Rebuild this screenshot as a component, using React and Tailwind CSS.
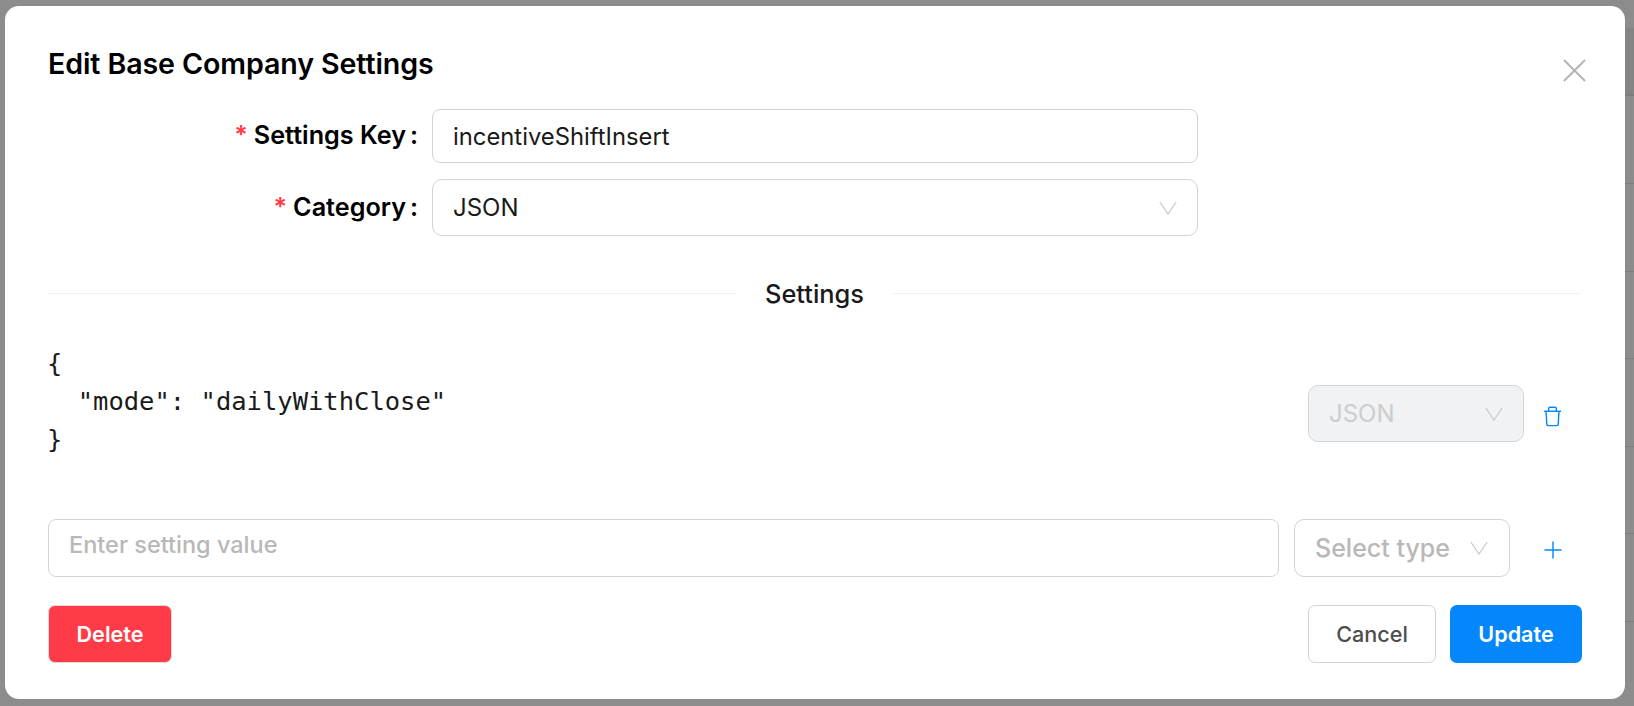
import React from "react";

const Chevron = ({ className }) => (
  <svg viewBox="0 0 18 18" className={className} fill="none" stroke="currentColor" strokeWidth="1.2">
    <path d="M0.8 3 L9 15 L17.2 3" />
  </svg>
);

const Trash = () => (
  <svg viewBox="0 0 20 22" className="w-[19px] h-[21px] text-[#0587fb]" fill="none" stroke="currentColor" strokeWidth="1.5">
    <path d="M1 5.5 H19" />
    <path d="M6 5.5 V2.5 Q6 1.2 7.3 1.2 H12.7 Q14 1.2 14 2.5 V5.5" />
    <path d="M3.2 5.5 L4 19 Q4.1 20.6 5.7 20.6 H14.3 Q15.9 20.6 16 19 L16.8 5.5" />
  </svg>
);

const Plus = () => (
  <svg viewBox="0 0 20 20" className="w-[20px] h-[20px] text-[#0587fb]" fill="none" stroke="currentColor" strokeWidth="1.4">
    <path d="M1.5 10 H18.5 M10 1.5 V18.5" />
  </svg>
);

export default function App() {
  return (
    <div className="h-[706px] w-[1634px] overflow-hidden bg-[#8c8c8c] flex pl-[5px] font-['Inter','Liberation_Sans',sans-serif]">
      <div className="mt-[6px] shrink-0 w-[1620px] h-[693px] bg-white rounded-[14px] pt-[43px] pl-[43px] pr-[42px]">
        <div className="flex justify-between h-[29px]">
          <h1 className="text-[28.6px] leading-[29px] font-semibold text-black tracking-[-0.1px]">Edit Base Company Settings</h1>
          <svg viewBox="0 0 24 24" className="w-[23px] h-[23px] mt-[10px] mr-[-3px] text-[#b3b3b3]" fill="none" stroke="currentColor" strokeWidth="2">
            <path d="M1 1 L23 23 M23 1 L1 23" />
          </svg>
        </div>

        <div className="mt-[31px] flex items-center h-[54px]">
          <label className="w-[384px] pr-[14px] text-right text-[25.2px] font-semibold text-black leading-none">
            <span className="text-[#ff3b47] mr-[6px]">*</span>Settings Key<span className="ml-[4px]">:</span>
          </label>
          <div className="w-[766px] h-[54px] flex items-center pt-[2px] border border-[#d4d4d4] rounded-[8px] px-[20px] text-[23.8px] text-[#1a1a1a]">
            incentiveShiftInsert
          </div>
        </div>

        <div className="mt-[16px] flex items-center h-[57px]">
          <label className="w-[384px] pr-[14px] text-right text-[25.2px] font-semibold text-black leading-none pt-[1px]">
            <span className="text-[#ff3b47] mr-[6px]">*</span>Category<span className="ml-[4px]">:</span>
          </label>
          <div className="w-[766px] h-[57px] flex items-center justify-between border border-[#d4d4d4] rounded-[10px] pl-[20px] pr-[20px] text-[24px] text-[#1a1a1a]">
            JSON
            <Chevron className="w-[18px] h-[18px] text-[#c8c8c8]" />
          </div>
        </div>

        <div className="mt-[38px] mr-[2px] flex items-center h-[38px]">
          <div className="w-[689px] h-[1px] bg-[#f0f0f0]" />
          <span className="flex-1 text-center pt-[3px] text-[25.4px] font-medium text-[#1a1a1a]">Settings</span>
          <div className="w-[689px] h-[1px] bg-[#f0f0f0]" />
        </div>

        <div className="mt-[32px] flex items-start">
          <pre className="flex-1 ml-[-1px] font-['DejaVu_Sans_Mono',monospace] text-[25.5px] leading-[38px] text-[#1a1a1a]">{"{\n  \"mode\": \"dailyWithClose\"\n}"}</pre>
          <div className="mt-[41px] w-[216px] h-[57px] flex items-center justify-between bg-[#f1f2f4] border border-[#d4d4d4] rounded-[10px] pl-[20px] pr-[20px] text-[24px] text-[#cdcdcd]">
            <span className="pt-[1px]">JSON</span>
            <Chevron className="w-[18px] h-[18px] text-[#c8c8c8]" />
          </div>
          <div className="mt-[62px] ml-[19px] mr-[21px]">
            <Trash />
          </div>
        </div>

        <div className="mt-[61px] flex items-center h-[58px]">
          <div className="w-[1231px] h-[58px] flex items-center pb-[6px] border border-[#d4d4d4] rounded-[8px] px-[20px] text-[23.5px] font-medium text-[#b8b8b8]">
            Enter setting value
          </div>
          <div className="ml-[15px] w-[216px] h-[58px] flex items-center justify-between border border-[#d4d4d4] rounded-[10px] pl-[20px] pr-[21px] text-[25px] font-medium text-[#b8b8b8]">
            <span className="pt-[1px]">Select type</span>
            <Chevron className="w-[18px] h-[18px] text-[#c8c8c8]" />
          </div>
          <div className="ml-[33px] mt-[4px]">
            <Plus />
          </div>
        </div>

        <div className="mt-[28px] flex justify-between">
          <button className="w-[124px] h-[58px] bg-[#ff3b47] border border-[#d9d9d9] rounded-[7px] text-white text-[21.6px] font-semibold">Delete</button>
          <div className="flex gap-[14px] mr-[1px]">
            <button className="w-[128px] h-[58px] bg-white border border-[#d4d4d4] rounded-[7px] text-[#4d4d4d] text-[21.6px] font-medium">Cancel</button>
            <button className="w-[132px] h-[58px] bg-[#0587fb] rounded-[7px] text-white text-[21.6px] font-semibold shadow-[0_2px_0_rgba(0,0,0,0.03)]">Update</button>
          </div>
        </div>
      </div>

      <div className="flex-1 pt-[28px]">
        <div className="h-[68px] bg-[#848484] border-b-2 border-[#7c7c7c]" />
        <div className="h-[88px] border-b border-[#7c7c7c]" />
        <div className="h-[88px] border-b border-[#7c7c7c]" />
        <div className="h-[87px] border-b border-[#7c7c7c]" />
        <div className="h-[88px] border-b border-[#7c7c7c]" />
        <div className="h-[87px] border-b border-[#7c7c7c]" />
        <div className="h-[88px] border-b border-[#7c7c7c]" />
      </div>
    </div>
  );
}
